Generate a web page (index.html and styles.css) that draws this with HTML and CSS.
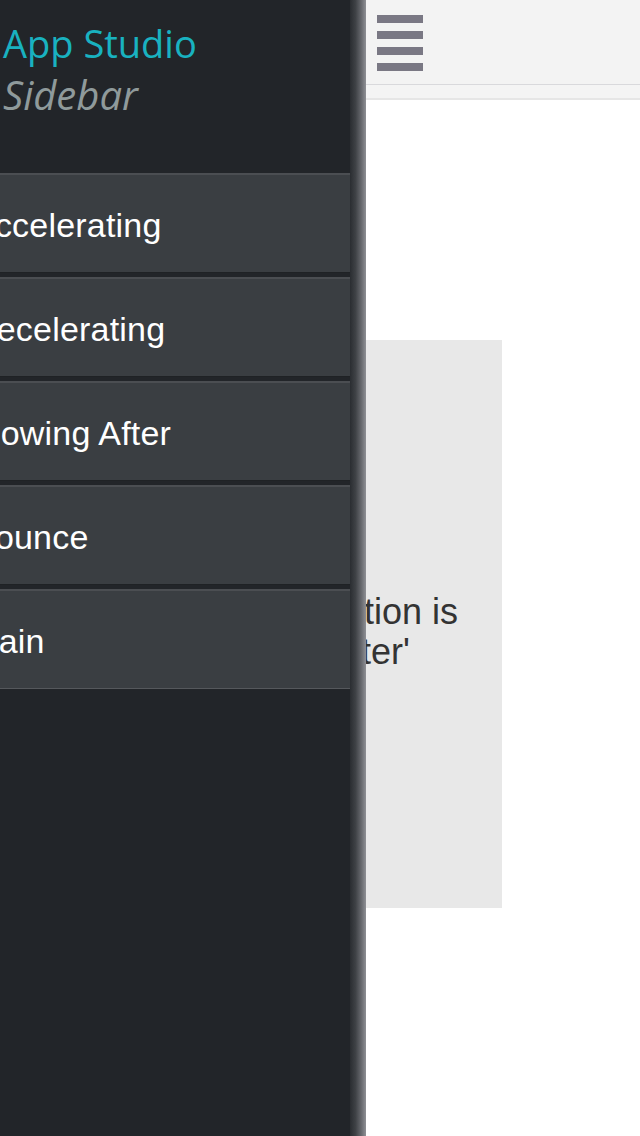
FILE: index.html
```html
<!DOCTYPE html>
<html lang="en">
<head>
<meta charset="utf-8">
<title>App Studio Sidebar</title>
<link rel="stylesheet" href="styles.css">
</head>
<body>
<div class="app">
  <aside class="sidebar">
    <div class="drawer">
      <div class="brand">
        <div class="brand-title">App Studio</div>
        <div class="brand-sub">Sidebar</div>
      </div>
      <nav class="menu">
        <a class="item">Accelerating</a>
        <a class="item">Decelerating</a>
        <a class="item">Flowing After</a>
        <a class="item">Bounce</a>
        <a class="item">Gain</a>
      </nav>
    </div>
  </aside>
  <div class="edge-shadow"></div>
  <main class="view">
    <header class="topbar">
      <div class="burger"><span></span><span></span><span></span><span></span></div>
    </header>
    <div class="subbar"></div>
    <section class="content">
      <div class="card">
        <p class="card-text">This animation is<br>'Flowing After'</p>
      </div>
    </section>
  </main>
</div>
</body>
</html>
```

FILE: styles.css
```css
html, body {
  margin: 0;
  padding: 0;
  height: 1136px;
  overflow: hidden;
  background: #ffffff;
}

.app {
  display: flex;
  height: 1136px;
  width: 640px;
}

.sidebar {
  flex: 0 0 350px;
  width: 350px;
  background: #222529;
  overflow: hidden;
}

.drawer {
  width: 378px;
  margin-left: -28px;
}

.brand {
  height: 173px;
  box-sizing: border-box;
  padding: 17px 0 0 31px;
  font-family: "Open Sans", "Noto Sans", sans-serif;
}

.brand-title {
  color: #19b2c0;
  font-size: 38px;
  line-height: 52px;
}

.brand-sub {
  color: #8f9a9b;
  font-size: 40px;
  font-style: italic;
  line-height: 52px;
}

.menu {
  display: flex;
  flex-direction: column;
  gap: 4px;
}

.item {
  display: block;
  height: 93px;
  padding-top: 4px;
  line-height: 93px;
  background: #3a3e42;
  border-top: 2px solid #4b4e52;
  border-bottom: 1px solid #1f2225;
  color: #ffffff;
  font-family: "Liberation Sans", Arial, sans-serif;
  font-size: 34px;
  letter-spacing: 0.2px;
  white-space: nowrap;
}

.item:last-child {
  border-bottom-color: #55585c;
}

.edge-shadow {
  flex: 0 0 16px;
  background: linear-gradient(to right, #2a2d31 0%, #3f4246 35%, #66686d 70%, #8f9095 100%);
}

.view {
  flex: 1 1 auto;
  min-width: 0;
  overflow: hidden;
  display: flex;
  flex-direction: column;
}

.topbar {
  flex: none;
  height: 69px;
  padding: 15px 0 0 11px;
  background: #f3f3f3;
  border-bottom: 1px solid #d9d9dc;
  display: flex;
  align-items: flex-start;
}

.burger {
  display: flex;
  flex-direction: column;
  gap: 8px;
}

.burger span {
  display: block;
  width: 46px;
  height: 8px;
  background: #7a7884;
}

.subbar {
  flex: none;
  height: 13px;
  background: #f4f4f4;
  border-bottom: 2px solid #e6e6e6;
}

.content {
  padding-top: 240px;
}

.card {
  width: 366px;
  height: 568px;
  margin-left: -230px;
  background: #e8e8e8;
  box-sizing: border-box;
  padding: 252px 0 0 52px;
}

.card-text {
  margin: 0;
  font-family: "Liberation Sans", Arial, sans-serif;
  font-size: 36px;
  line-height: 40px;
  color: #333333;
  white-space: nowrap;
}
```
